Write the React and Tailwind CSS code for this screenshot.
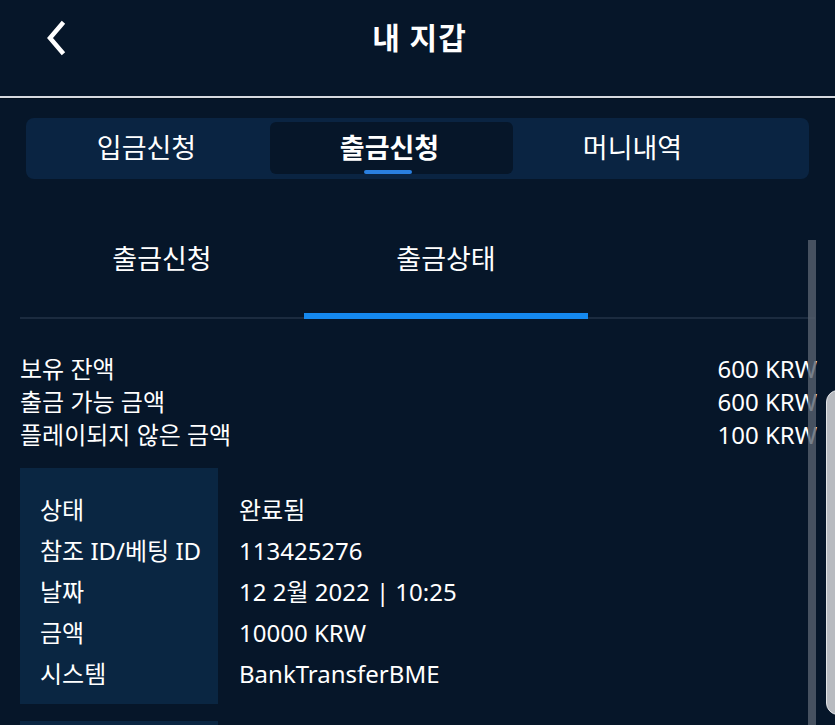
import { useState } from "react";

const font = { fontFamily: '"Noto Sans", "Noto Sans CJK KR", sans-serif' };

const balances = [
  ["보유 잔액", "600 KRW"],
  ["출금 가능 금액", "600 KRW"],
  ["플레이되지 않은 금액", "100 KRW"],
];

const details = [
  ["상태", "완료됨"],
  ["참조 ID/베팅 ID", "113425276"],
  ["날짜", "12 2월 2022 | 10:25"],
  ["금액", "10000 KRW"],
  ["시스템", "BankTransferBME"],
];

function Back() {
  return (
    <svg width="24" height="36" viewBox="0 0 24 36" fill="none">
      <polyline
        points="18,4 6,18 18,32"
        stroke="white"
        strokeWidth="4.5"
        strokeLinecap="square"
        strokeLinejoin="miter"
      />
    </svg>
  );
}

export default function App() {
  const [tab, setTab] = useState(1);
  const [sub, setSub] = useState(1);
  const tabs = ["입금신청", "출금신청", "머니내역"];
  const subs = ["출금신청", "출금상태"];

  return (
    <div className="relative w-[835px] h-[725px] overflow-hidden bg-[#061629] text-white" style={font}>
      <header className="relative h-[96px] flex items-center justify-center">
        <button className="absolute left-[44px] top-[20px]">
          <Back />
        </button>
        <h1 className="text-[30px] font-bold tracking-[1px] -mt-[22px] ml-[4px]">내 지갑</h1>
      </header>
      <div className="h-[2px] bg-[#d5d9de]" />
      <div className="h-[1px] bg-[#02101e]" />

      <div className="mx-[26px] mt-[19px] h-[61px] rounded-lg bg-[#0a2442] pl-[1px] pt-[4px] flex">
        {tabs.map((t, i) => (
          <button
            key={t}
            onClick={() => setTab(i)}
            className={`relative w-[243px] h-[52px] rounded-md text-[27px] flex items-center justify-center ${
              tab === i ? "bg-[#061629] font-semibold" : ""
            }`}
          >
            <span className="-ml-[4px]">{t}</span>
            {tab === i && (
              <span className="absolute bottom-0 left-1/2 -translate-x-1/2 -ml-[4px] w-[48px] h-[4px] rounded-full bg-[#2a7fdf]" />
            )}
          </button>
        ))}
      </div>

      <div className="mx-[20px] mt-[47px] flex border-b-2 border-[#1b2b3f]">
        {subs.map((t, i) => (
          <button
            key={t}
            onClick={() => setSub(i)}
            className="relative w-[284px] h-[93px] -mb-[2px] pt-[16px] text-[27px] leading-[34px] flex justify-center items-start"
          >
            {t}
            {sub === i && (
              <span className="absolute bottom-0 left-0 right-0 h-[6px] bg-[#1589ef]" />
            )}
          </button>
        ))}
      </div>

      <div className="px-[20px] mt-[33px] w-[836px] pr-[19px]">
        {balances.map(([k, v]) => (
          <div key={k} className="flex justify-between h-[33px] items-center text-[24px]">
            <span>{k}</span>
            <span>{v}</span>
          </div>
        ))}
      </div>

      <div className="mx-[20px] mt-[17px] flex text-[24px]">
        <div className="w-[198px] bg-[#0a2642] pl-[20px] pt-[21px] pb-[10px]">
          {details.map(([k]) => (
            <div key={k} className="h-[41px] flex items-center">{k}</div>
          ))}
        </div>
        <div className="pl-[21px] pt-[21px] pb-[10px]">
          {details.map(([k, v]) => (
            <div key={k} className="h-[41px] flex items-center">{v}</div>
          ))}
        </div>
      </div>
      <div className="mx-[20px] mt-[17px] w-[198px] h-[40px] bg-[#0a2642]" />

      <div className="absolute left-[808px] top-[240px] w-[8px] h-[500px] bg-[#56606e]/80" />
      <div className="absolute left-[826px] top-[390px] w-[14px] h-[325px] rounded-l-xl bg-[#b8bbc0] border border-[#e2e4e7]" />
    </div>
  );
}
